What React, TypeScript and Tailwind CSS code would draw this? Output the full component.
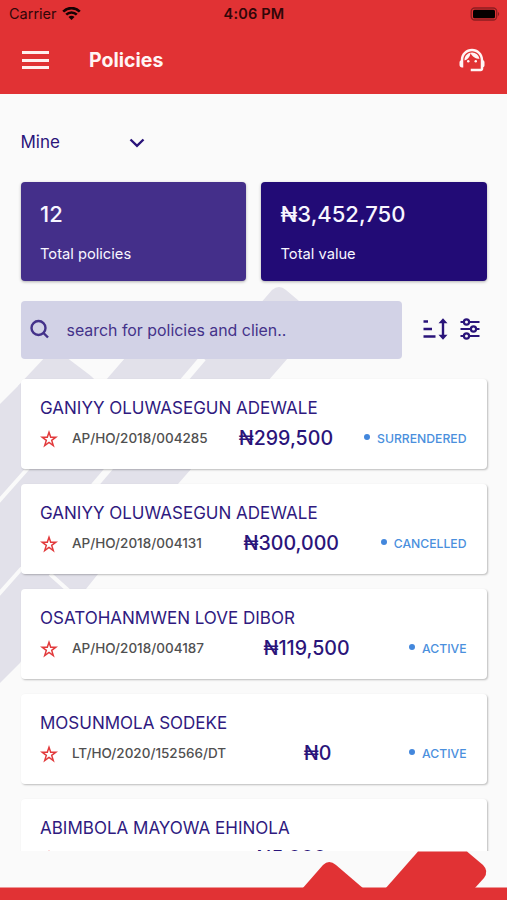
import { useState } from 'react';
import { MdSupportAgent } from 'react-icons/md';

interface Policy {
  name: string;
  reference: string;
  amount: string;
  status: string;
}

const policies: Policy[] = [
  { name: 'GANIYY OLUWASEGUN ADEWALE', reference: 'AP/HO/2018/004285', amount: '₦299,500', status: 'SURRENDERED' },
  { name: 'GANIYY OLUWASEGUN ADEWALE', reference: 'AP/HO/2018/004131', amount: '₦300,000', status: 'CANCELLED' },
  { name: 'OSATOHANMWEN LOVE DIBOR', reference: 'AP/HO/2018/004187', amount: '₦119,500', status: 'ACTIVE' },
  { name: 'MOSUNMOLA SODEKE', reference: 'LT/HO/2020/152566/DT', amount: '₦0', status: 'ACTIVE' },
  { name: 'ABIMBOLA MAYOWA EHINOLA', reference: 'AP/HO/2018/004131', amount: '₦5,000', status: 'CANCELLED' },
];

const StatusBar = () => (
  <div className="grid h-7 grid-cols-3 items-center pl-[9px] pr-[7px] text-[14.5px] text-[#300608]">
    <div className="flex items-center gap-[5px]">
      <span>Carrier</span>
      <svg width="19" height="14" viewBox="0 0 19 14" fill="none" stroke="#160203" strokeWidth="2.6">
        <path d="M1.2 4.6C6 -.1 13 -.1 17.8 4.6" />
        <path d="M4.2 7.7c3-3 7.6-3 10.6 0" />
        <path d="M6.5 9.9 9.5 12.9l3-3c-1.7-1.5-4.3-1.5-6 0Z" fill="#160203" stroke="none" />
      </svg>
    </div>
    <span className="-ml-px text-center font-semibold tracking-[0.2px]">4:06 PM</span>
    <svg className="-mt-px justify-self-end" width="30" height="14" viewBox="0 0 30 14">
      <rect x="1.2" y="1" width="25.5" height="12" rx="3.5" fill="none" stroke="#8c1e21" strokeWidth="1.3" />
      <rect x="3" y="2.7" width="22" height="8.6" rx="1.5" fill="#050000" />
      <path d="M28 5v4c1.6-.7 1.6-3.3 0-4Z" fill="#8c1e21" />
    </svg>
  </div>
);

const Header = () => (
  <header className="h-[94px] shrink-0 bg-[#e13234]">
    <StatusBar />
    <div className="flex h-16 items-center pl-[22px] pr-5">
      <button aria-label="Menu" className="flex w-[27px] flex-col gap-[4.5px]">
        <span className="h-[3px] bg-[#fff0f0]" />
        <span className="h-[3px] bg-[#fff0f0]" />
        <span className="h-[3px] bg-[#fff0f0]" />
      </button>
      <h1 className="ml-10 flex-1 pt-0.5 text-[19.5px] font-bold text-[#fff5f5]">Policies</h1>
      <MdSupportAgent className="mb-px size-[30px] text-[#fff5f5]" />
    </div>
  </header>
);

// Faint diagonal brand pattern that sits behind the list
const Backdrop = () => (
  <svg className="absolute left-0 top-0 h-[900px] w-[507px]" viewBox="0 0 507 900" fill="#e2e1ea">
    <path d="M18 386 48 354q7-5 14 0L95 379 100 388Z" />
    <path d="M0 404 20 384H101L141 340H304L288 358 178 484 98 574 86 589H60L20 663 0 683Z" />
    <path d="M246 320 272 290q7-6 14 0L312 312V340H246Z" />
    <path d="M73 357 95 380H106L125 358V350H73Z" fill="#fafafa" />
    <path d="M94 486 203 358" stroke="#fafafa" strokeWidth="7" />
    <path d="M-2 502 29 467M-2 595 22 568M50 574 69 591" stroke="#fafafa" strokeWidth="4" />
  </svg>
);

const StatCard = ({ value, label, className }: { value: string; label: string; className: string }) => (
  <div className={`h-[99px] rounded-[4px] px-[19.5px] pt-[17px] text-[#f8f6ff] shadow-[0_1px_3px_rgba(0,0,0,0.3)] ${className}`}>
    <p className="text-[22px] font-medium leading-[30px]">{value}</p>
    <p className="mt-[15px] text-[14.7px] leading-5">{label}</p>
  </div>
);

const SearchRow = () => (
  <div className="mt-5 flex items-center">
    <label className="flex h-[58px] w-[381px] items-center rounded-[4px] bg-[#d2d2e6] pl-2 text-[#44328a]">
      <svg className="mb-px" width="20" height="20" viewBox="0 0 20 20" fill="none" stroke="#44328a" strokeWidth="2.4">
        <circle cx="9.5" cy="9" r="7" />
        <path d="m14.5 14 4.5 4.500" />
      </svg>
      <span className="ml-[18px] pt-0.5 text-[15.9px]">search for policies and clien..</span>
    </label>
    <svg className="mb-px ml-5" width="26" height="22" viewBox="0 0 26 22" fill="none" stroke="#2a147a" strokeWidth="2.4">
      <path d="M1.5 3.500h4.500M1.500 11h8.500M1.500 18.500h12" />
      <path d="M21 3v16" />
      <path d="m16.500 5.200 4.500-5 4.500 5ZM16.500 16.800l4.500 5 4.500-5Z" fill="#2a147a" stroke="none" />
    </svg>
    <svg className="mb-px ml-3" width="21" height="22" viewBox="0 0 21 22" fill="none" stroke="#2a147a" strokeWidth="2.2">
      <path d="M.5 4h3.500M9 4h10.500M.5 11h10.500M16 11h3.500M.5 18h3.500M9 18h10.500" />
      <circle cx="6.5" cy="4" r="2.6" />
      <circle cx="13.5" cy="11" r="2.6" />
      <circle cx="6.5" cy="18" r="2.6" />
    </svg>
  </div>
);

const PolicyCard = ({ policy, starred, onStar }: { policy: Policy; starred: boolean; onStar: () => void }) => (
  <article className="h-[90px] shrink-0 rounded-[4px] bg-white pl-[19.5px] pr-5 pt-[17px] shadow-[1px_1px_2px_rgba(0,0,0,0.25)]">
    <h2 className="whitespace-nowrap text-[17px] leading-6 text-[#2f1a80]">{policy.name}</h2>
    <div className="mt-1 flex h-7 items-center justify-between whitespace-nowrap">
      <div className="flex items-center">
        <button aria-label="Star policy" className="pt-0.5" onClick={onStar}>
          <svg width="18" height="18" viewBox="0 0 18 18" fill={starred ? '#e23a3c' : 'none'} stroke="#e23a3c" strokeWidth="1.5">
            <path d="m9 2.300 1.700 4.900h5.200l-4.200 3.200 1.600 5.200L9 12.500l-4.300 3.100 1.600-5.200-4.200-3.200h5.200Z" />
          </svg>
        </button>
        <span className="ml-[14px] pt-0.5 text-[13.5px] font-medium text-[#505050]">{policy.reference}</span>
      </div>
      <span className="pt-0.5 text-[19.6px] font-medium text-[#2a147a]">{policy.amount}</span>
      <span className="flex items-center text-[12.2px] font-medium text-[#4a8fdd]">
        <i className="mr-[7px] size-[6px] rounded-full bg-[#4387dc]" />
        <span className="pt-[3px]">{policy.status}</span>
      </span>
    </div>
  </article>
);

const Footer = () => (
  <footer className="h-[49px] shrink-0">
    <svg className="block" width="507" height="49" viewBox="0 0 507 49" fill="#e13234">
      <path d="M302 38 323 14q6-6 13 0L364 38Z" />
      <path d="M385 38 418 0.5H467L483 14q6 6 1 13L474 38Z" />
      <path d="M0 36.5H507V49H0Z" />
    </svg>
  </footer>
);

const App = () => {
  const [starred, setStarred] = useState<number[]>([]);

  const toggleStar = (index: number) => {
    setStarred((current) => (current.includes(index) ? current.filter((i) => i !== index) : [...current, index]));
  };

  return (
    <div className="relative h-[900px] w-[507px] overflow-hidden bg-[#fafafa] font-['Inter','Liberation_Sans',sans-serif]">
      <Backdrop />
      <div className="relative flex h-full flex-col">
        <Header />
        <main className="flex min-h-0 flex-1 flex-col overflow-hidden px-[20.5px]">
          <button className="mt-[37px] flex h-6 w-[124px] items-center justify-between text-[17px] text-[#2a147a]">
            Mine
            <svg width="16" height="10" viewBox="0 0 16 10" fill="none" stroke="#2a147a" strokeWidth="2.4">
              <path d="m1.500 1.500 6.500 6.300 6.500-6.300" />
            </svg>
          </button>
          <div className="mt-[26.5px] grid grid-cols-2 gap-[15px]">
            <StatCard value="12" label="Total policies" className="bg-[#442f8a]" />
            <StatCard value="₦3,452,750" label="Total value" className="bg-[#220b76]" />
          </div>
          <SearchRow />
          <div className="mt-5 flex flex-col gap-[15px]">
            {policies.map((policy, index) => (
              <PolicyCard
                key={index}
                policy={policy}
                starred={starred.includes(index)}
                onStar={() => toggleStar(index)}
              />
            ))}
          </div>
        </main>
        <Footer />
      </div>
    </div>
  );
};

export default App;
